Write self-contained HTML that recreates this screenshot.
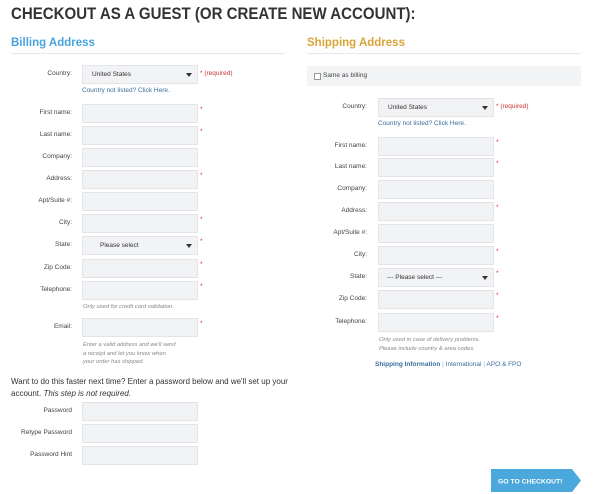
<!DOCTYPE html><html><head><style>
body{margin:0;width:600px;height:494px;background:#fff;font-family:"Liberation Sans",sans-serif;position:relative;overflow:hidden;color:#333}
.a{position:absolute}
h1{position:absolute;left:11px;top:4px;margin:0;font-size:17px;font-weight:bold;color:#333;transform:scaleX(0.885);transform-origin:0 0;white-space:nowrap}
.h2{position:absolute;font-size:11.5px;font-weight:bold}
.hr{position:absolute;height:1px;background:#e8e8e8}
.l{position:absolute;font-size:6.5px;color:#444;text-align:right;width:70px}
.i{position:absolute;width:114px;height:17px;background:#f2f3f5;border:1px solid #e2e4e7;box-sizing:content-box}
.s{font-size:6.5px;color:#333;line-height:17px}
.s:after{content:"";position:absolute;right:5px;top:7px;border-left:3px solid transparent;border-right:3px solid transparent;border-top:4px solid #333}
.r{position:absolute;font-size:6.5px;color:#c33}
.n{position:absolute;font-size:5.8px;color:#888;font-style:italic;line-height:8.5px}
.lk{position:absolute;font-size:6.5px;color:#3a6f9e}
</style></head><body>
<h1>CHECKOUT AS A GUEST (OR CREATE NEW ACCOUNT):</h1>
<div class="h2" style="left:11px;top:37px;color:#4aa3dc">Billing Address</div>
<div class="hr" style="left:11px;top:53px;width:274px"></div>
<div class="h2" style="left:307px;top:37px;color:#d9a43a">Shipping Address</div>
<div class="hr" style="left:307px;top:53px;width:274px"></div>

<div class="l" style="left:2px;top:70px">Country:</div>
<div class="i s" style="left:82px;top:65px"><span style="padding-left:9px">United States</span></div>
<div class="r" style="left:200px;top:70px">* (required)</div>
<div class="lk" style="left:82px;top:87px">Country not listed? Click Here.</div>

<div class="l" style="left:2px;top:109px">First name:</div><div class="i" style="left:82px;top:104px"></div><div class="r" style="left:200px;top:106px">*</div>
<div class="l" style="left:2px;top:131px">Last name:</div><div class="i" style="left:82px;top:126px"></div><div class="r" style="left:200px;top:128px">*</div>
<div class="l" style="left:2px;top:153px">Company:</div><div class="i" style="left:82px;top:148px"></div>
<div class="l" style="left:2px;top:175px">Address:</div><div class="i" style="left:82px;top:170px"></div><div class="r" style="left:200px;top:172px">*</div>
<div class="l" style="left:2px;top:197px">Apt/Suite #:</div><div class="i" style="left:82px;top:192px"></div>
<div class="l" style="left:2px;top:219px">City:</div><div class="i" style="left:82px;top:214px"></div><div class="r" style="left:200px;top:216px">*</div>
<div class="l" style="left:2px;top:241px">State:</div><div class="i s" style="left:82px;top:236px"><span style="padding-left:17px">Please select</span></div><div class="r" style="left:200px;top:238px">*</div>
<div class="l" style="left:2px;top:264px">Zip Code:</div><div class="i" style="left:82px;top:259px"></div><div class="r" style="left:200px;top:261px">*</div>
<div class="l" style="left:2px;top:286px">Telephone:</div><div class="i" style="left:82px;top:281px"></div><div class="r" style="left:200px;top:283px">*</div>
<div class="n" style="left:83px;top:303px">Only used for credit card validation.</div>
<div class="l" style="left:2px;top:323px">Email:</div><div class="i" style="left:82px;top:318px"></div><div class="r" style="left:200px;top:320px">*</div>
<div class="n" style="left:83px;top:341px">Enter a valid address and we'll send<br>a receipt and let you know when<br>your order has shipped.</div>
<div class="a" style="left:11px;top:376px;font-size:8px;line-height:12px;color:#333">Want to do this faster next time? Enter a password below and we'll set up your<br>account. <i>This step is not required.</i></div>
<div class="l" style="left:2px;top:407px">Password</div><div class="i" style="left:82px;top:402px"></div>
<div class="l" style="left:2px;top:429px">Retype Password</div><div class="i" style="left:82px;top:424px"></div>
<div class="l" style="left:2px;top:451px">Password Hint</div><div class="i" style="left:82px;top:446px"></div>

<div class="a" style="left:307px;top:66px;width:274px;height:20px;background:#f2f3f5"></div>
<div class="a" style="left:314px;top:73px;width:5px;height:5px;border:1px solid #999;background:#fff"></div>
<div class="a" style="left:323px;top:72px;font-size:6.5px;color:#444">Same as billing</div>

<div class="l" style="left:297px;top:103px">Country:</div>
<div class="i s" style="left:378px;top:98px"><span style="padding-left:9px">United States</span></div>
<div class="r" style="left:496px;top:103px">* (required)</div>
<div class="lk" style="left:378px;top:120px">Country not listed? Click Here.</div>
<div class="l" style="left:297px;top:142px">First name:</div><div class="i" style="left:378px;top:137px"></div><div class="r" style="left:496px;top:139px">*</div>
<div class="l" style="left:297px;top:163px">Last name:</div><div class="i" style="left:378px;top:158px"></div><div class="r" style="left:496px;top:160px">*</div>
<div class="l" style="left:297px;top:185px">Company:</div><div class="i" style="left:378px;top:180px"></div>
<div class="l" style="left:297px;top:207px">Address:</div><div class="i" style="left:378px;top:202px"></div><div class="r" style="left:496px;top:204px">*</div>
<div class="l" style="left:297px;top:229px">Apt/Suite #:</div><div class="i" style="left:378px;top:224px"></div>
<div class="l" style="left:297px;top:251px">City:</div><div class="i" style="left:378px;top:246px"></div><div class="r" style="left:496px;top:248px">*</div>
<div class="l" style="left:297px;top:273px">State:</div><div class="i s" style="left:378px;top:268px"><span style="padding-left:8px">--- Please select ---</span></div><div class="r" style="left:496px;top:270px">*</div>
<div class="l" style="left:297px;top:295px">Zip Code:</div><div class="i" style="left:378px;top:290px"></div><div class="r" style="left:496px;top:292px">*</div>
<div class="l" style="left:297px;top:318px">Telephone:</div><div class="i" style="left:378px;top:313px"></div><div class="r" style="left:496px;top:315px">*</div>
<div class="n" style="left:379px;top:336px">Only used in case of delivery problems.<br>Please include country &amp; area codes.</div>
<div class="lk" style="left:375px;top:361px"><b>Shipping Information</b> <span style="color:#9bc">|</span> International <span style="color:#9bc">|</span> APO &amp; FPO</div>

<svg class="a" style="left:491px;top:469px" width="90" height="23"><polygon points="0,0 81,0 90,11.5 81,23 0,23" fill="#4aa8dc"/><text x="7" y="14.5" font-family="Liberation Sans" font-weight="bold" font-size="6.8" fill="#fff">GO TO CHECKOUT!</text></svg>
</body></html>
